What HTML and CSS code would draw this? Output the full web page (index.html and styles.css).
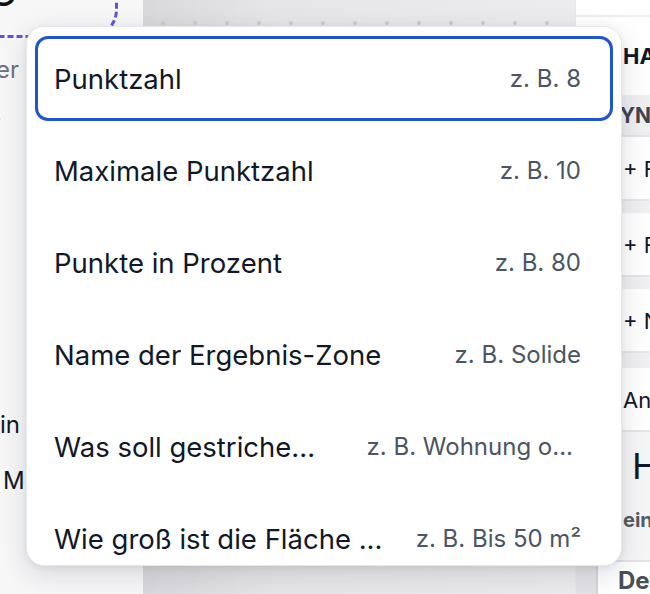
FILE: index.html
```html
<!DOCTYPE html>
<html lang="de">
<head>
    <meta charset="UTF-8">
    <meta name="viewport" content="width=device-width, initial-scale=1.0">
    <title>Variable einfügen</title>
    <link rel="stylesheet" href="styles.css">
</head>
<body>
    <div class="page">
        <aside class="side">
            <div class="side-title">C</div>
            <div class="dropzone"></div>
            <p class="side-hint">Oder</p>
            <p class="side-dot">.</p>
            <p class="side-line side-line-first">Termin</p>
            <p class="side-line side-line-second">M</p>
        </aside>

        <main class="canvas">
            <div class="ruler">
                <span></span><span></span><span></span><span></span><span></span>
                <span></span><span></span><span></span><span></span><span></span>
                <span></span><span></span><span></span>
            </div>
        </main>

        <aside class="panel">
            <div class="panel-top"></div>
            <h4 class="panel-title">HAUPT</h4>
            <div class="panel-head">SYNTAX</div>
            <div class="panel-row">+ Feld</div>
            <div class="panel-gap"></div>
            <div class="panel-row">+ Formel</div>
            <div class="panel-gap"></div>
            <div class="panel-row">+ Name</div>
            <div class="panel-gap panel-gap-wide"></div>
            <div class="panel-row">Antwort</div>
            <div class="panel-big">H</div>
            <div class="panel-sub">ein</div>
            <div class="panel-foot">
                <span class="panel-foot-side"></span>
                <span class="panel-foot-text">Details</span>
            </div>
        </aside>
    </div>

    <div class="menu">
        <div class="menu-item active">
            <span class="label">Punktzahl</span>
            <span class="hint">z. B. 8</span>
        </div>
        <div class="menu-item">
            <span class="label">Maximale Punktzahl</span>
            <span class="hint">z. B. 10</span>
        </div>
        <div class="menu-item">
            <span class="label">Punkte in Prozent</span>
            <span class="hint">z. B. 80</span>
        </div>
        <div class="menu-item">
            <span class="label">Name der Ergebnis-Zone</span>
            <span class="hint">z. B. Solide</span>
        </div>
        <div class="menu-item">
            <span class="label">Was soll gestriche...</span>
            <span class="hint hint-cut">z. B. Wohnung o...</span>
        </div>
        <div class="menu-item">
            <span class="label">Wie groß ist die Fläche ...</span>
            <span class="hint">z. B. Bis 50 m²</span>
        </div>
    </div>
</body>
</html>
```

FILE: styles.css
```css
:root {
    --text: #111827;
    --muted: #4b5563;
    --accent: #2055d0;
    --line: #e4e4e7;
    --purple: #6155d4;
}

* {
    box-sizing: border-box;
}

body {
    margin: 0;
    width: 650px;
    height: 594px;
    overflow: hidden;
    font-family: Inter, 'Noto Sans', sans-serif;
    color: var(--text);
    background: #ffffff;
}

.page {
    display: grid;
    grid-template-columns: 143px 432px 75px;
    height: 594px;
}

/* linke Spalte */
.side {
    background: #f7f7f8;
    overflow: hidden;
}

.side-title {
    font-size: 40px;
    line-height: 1;
    margin: -28px 0 0 -12px;
    color: #111;
}

.dropzone {
    width: 160px;
    height: 70px;
    margin: -44px 0 0 -42px;
    border: 3px dashed var(--purple);
    border-radius: 28px;
}

.side p {
    margin: 0;
    white-space: nowrap;
    font-size: 24px;
    line-height: 30px;
}

.side-hint {
    color: #6b7280;
    margin-top: 17px !important;
    text-indent: -37px;
}

.side-dot {
    color: #6b7280;
    margin-top: 13px !important;
    text-indent: -5px;
}

.side .side-line {
    line-height: 56px;
}

.side .side-line-first {
    margin-top: 269px;
    text-indent: -58px;
}

.side .side-line-second {
    text-indent: 3px;
}

/* Mitte */
.canvas {
    background: linear-gradient(90deg, #d9d9dc 0%, #e6e6e8 30%, #ececee 100%);
}

.ruler {
    display: flex;
    gap: 28px;
    padding: 21px 0 0 18px;
}

.ruler span {
    width: 4px;
    height: 4px;
    border-radius: 50%;
    background: #cbcbcf;
}

/* rechte Spalte */
.panel {
    background: #ffffff;
    border-left: 1px solid #e8e8ea;
    overflow: hidden;
    white-space: nowrap;
    padding-left: 47px;
    display: flex;
    flex-direction: column;
}

.panel-top {
    flex: none;
    height: 17px;
    margin-left: -47px;
    border-bottom: 2px solid #eeeeef;
}

.panel-title {
    flex: none;
    margin: 26px 0 0;
    font-size: 22px;
    font-weight: 700;
    height: 52px;
}

.panel-head {
    flex: none;
    margin-left: -47px;
    padding-left: 30px;
    height: 42px;
    line-height: 42px;
    background: #efeff1;
    color: #3f4550;
    font-weight: 700;
    font-size: 21px;
    border-bottom: 2px solid #e4e4e7;
}

.panel-row {
    flex: none;
    margin-left: -47px;
    padding-left: 47px;
    height: 64px;
    line-height: 64px;
    font-size: 22px;
    border-bottom: 2px solid #e6e6e8;
}

.panel-gap {
    flex: none;
    margin-left: -47px;
    height: 12px;
    background: #f0f0f2;
}

.panel-gap-wide {
    height: 15px;
}

.panel-big {
    flex: none;
    margin-left: -47px;
    padding-left: 56px;
    background: #f6f6f7;
    font-size: 36px;
    line-height: 68px;
    height: 74px;
}

.panel-sub {
    flex: none;
    margin-left: -47px;
    padding: 2px 0 0 47px;
    background: #f6f6f7;
    font-size: 20px;
    font-weight: 700;
    color: #555b66;
    height: 56px;
    line-height: 24px;
    border-bottom: 2px solid #e4e4e7;
}

.panel-foot {
    display: flex;
    margin-left: -48px;
    flex: 1;
}

.panel-foot-side {
    flex: none;
    width: 23px;
    background: #e3e3e6;
    border-right: 2px solid #d6d6d9;
}

.panel-foot-text {
    flex: none;
    padding: 4px 0 0 20px;
    font-size: 24px;
    font-weight: 700;
    color: #4b4f57;
}

/* Dropdown */
.menu {
    position: absolute;
    top: 26px;
    left: 26px;
    width: 596px;
    height: 540px;
    padding: 9px 8px;
    background: #ffffff;
    border: 1px solid #e6e7eb;
    border-radius: 18px;
    box-shadow: 0 8px 28px rgba(15, 23, 42, 0.14), 0 2px 6px rgba(15, 23, 42, 0.06);
    display: flex;
    flex-direction: column;
    gap: 7px;
    overflow: hidden;
}

.menu-item {
    flex: none;
    height: 85px;
    display: flex;
    align-items: center;
    justify-content: space-between;
    gap: 24px;
    padding: 0 29px 0 16px;
    border: 3px solid transparent;
    border-radius: 13px;
    white-space: nowrap;
}

.menu-item.active {
    border-color: var(--accent);
}

.label {
    font-size: 27.5px;
    color: var(--text);
}

.hint {
    font-size: 24px;
    color: var(--muted);
}

.hint-cut {
    padding-right: 8px;
}
```
